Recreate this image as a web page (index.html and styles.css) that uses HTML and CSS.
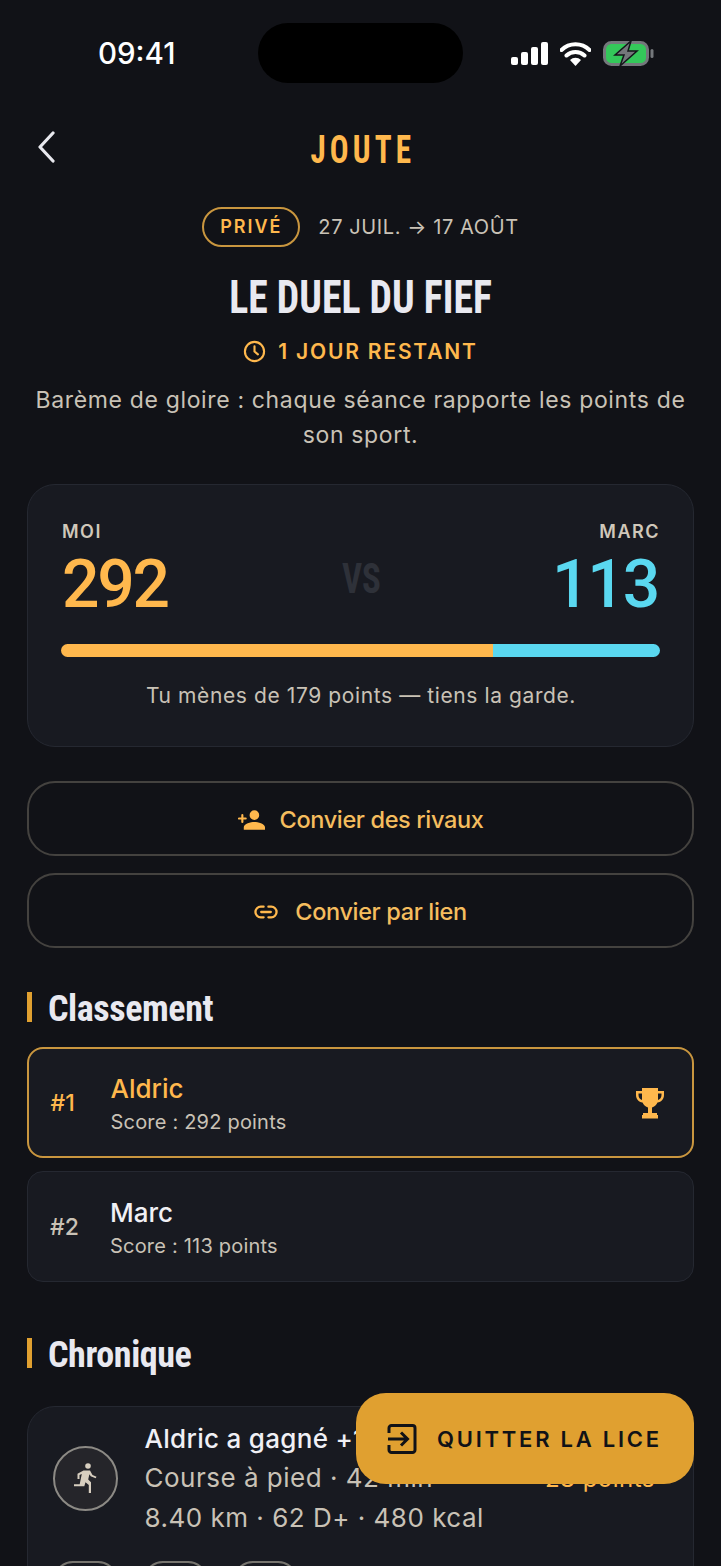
FILE: index.html
```html
<!DOCTYPE html>
<html lang="fr">
<head>
<meta charset="utf-8">
<title>Joute</title>
<link rel="stylesheet" href="styles.css">
</head>
<body>
<div class="screen">
  <div class="status">
    <span class="time">09:41</span>
    <span class="island"></span>
    <span class="sys">
      <svg class="sig" width="37" height="23" viewBox="0 0 37 23"><rect x="0" y="15" width="7" height="8" rx="2"/><rect x="10" y="10" width="7" height="13" rx="2"/><rect x="20" y="5" width="7" height="18" rx="2"/><rect x="30" y="0" width="7" height="23" rx="2"/></svg>
      <svg class="wifi" width="31" height="24" viewBox="0 0 31 24"><path d="M1.5 8a20 20 0 0 1 28 0M6.5 13.5a13 13 0 0 1 18 0" fill="none" stroke="#fff" stroke-width="4" stroke-linecap="round"/><path d="M15.5 24l-5.5-6a8 8 0 0 1 11 0z" fill="#fff"/></svg>
      <svg class="batt" width="51" height="25" viewBox="0 0 51 25"><rect x="1.500" y="1.500" width="43" height="22" rx="7" fill="#34c85a" stroke="#74777b" stroke-width="3"/><rect x="47.500" y="8" width="3" height="9" rx="1.500" fill="#74777b"/><path d="M28 0L12 14h9l-4 11 17-15h-9z" fill="#74777b" stroke="#14151a" stroke-width="1.500"/></svg>
    </span>
  </div>

  <header class="top">
    <svg class="back" width="18" height="32" viewBox="0 0 18 32"><path d="M16 2L3 16l13 14" fill="none" stroke="#e8e8ee" stroke-width="3.200" stroke-linecap="round" stroke-linejoin="round"/></svg>
    <span class="brand">JOUTE</span>
  </header>

  <div class="meta">
    <span class="badge">PRIVÉ</span>
    <span class="dates">27 JUIL. → 17 AOÛT</span>
  </div>
  <h1 class="title">LE DUEL DU FIEF</h1>
  <div class="remain">
    <svg width="23" height="23" viewBox="0 0 24 24"><circle cx="12" cy="12" r="10" fill="none" stroke="#ffb84d" stroke-width="2.200"/><path d="M12 6.500V12l3.600 3" fill="none" stroke="#ffb84d" stroke-width="2.200" stroke-linecap="round"/></svg>
    <span>1 JOUR RESTANT</span>
  </div>
  <p class="desc">Barème de gloire : chaque séance rapporte les points de son sport.</p>

  <section class="score">
    <div class="score-row">
      <div class="side">
        <span class="who">MOI</span>
        <span class="num me">292</span>
      </div>
      <span class="vs">VS</span>
      <div class="side right">
        <span class="who">MARC</span>
        <span class="num rival">113</span>
      </div>
    </div>
    <div class="bar"><span class="bar-me" style="width:72.1%"></span><span class="bar-rival"></span></div>
    <p class="lead">Tu mènes de 179 points — tiens la garde.</p>
  </section>

  <a class="btn first">
    <svg width="27" height="22" viewBox="0 0 28 22"><path d="M17.500 1a5 5 0 1 1 0 10 5 5 0 0 1 0-10zM6.500 21v-2.500c0-3.600 7.300-5.500 11-5.500s11 1.900 11 5.500V21z" fill="#ffb84d" transform="translate(-.5 0)"/><path d="M1 9.500h7M4.500 6v7" stroke="#ffb84d" stroke-width="2.200" stroke-linecap="round"/></svg>
    <span>Convier des rivaux</span>
  </a>
  <a class="btn link">
    <svg width="24" height="14" viewBox="0 0 25 14"><path d="M10 1.500H7a5.500 5.500 0 0 0 0 11h3M15 1.500h3a5.500 5.500 0 0 1 0 11h-3M7.500 7h10" fill="none" stroke="#ffb84d" stroke-width="2.400" stroke-linecap="round"/></svg>
    <span>Convier par lien</span>
  </a>

  <h2 class="sec sec-rank">Classement</h2>
  <div class="rank lead-rank">
    <span class="pos">#1</span>
    <div class="rank-body">
      <span class="name">Aldric</span>
      <span class="pts">Score : 292 points</span>
    </div>
    <svg class="trophy" width="30" height="32" viewBox="0 0 30 32"><path d="M7 1h16v3h6v4c0 4-2.600 7-6.500 7.600-1.100 2.600-3.300 4.300-5.500 4.800V26h5v2H8v-2h5v-5.600c-2.200-.5-4.400-2.200-5.500-4.800C3.600 15 1 12 1 8V4h6zM3.500 6.500V8c0 2.400 1.400 4.300 3.500 5V6.500zm23 0H23V13c2.100-.7 3.500-2.600 3.500-5z" fill="#ffb84d"/><rect x="7" y="28" width="16" height="3.500" fill="#ffb84d"/></svg>
  </div>
  <div class="rank">
    <span class="pos">#2</span>
    <div class="rank-body">
      <span class="name">Marc</span>
      <span class="pts">Score : 113 points</span>
    </div>
  </div>

  <h2 class="sec sec-log">Chronique</h2>
  <article class="entry">
    <div class="entry-row">
      <span class="sport">
        <svg width="23" height="30" viewBox="0 0 23 30"><circle cx="14" cy="3" r="2.800" fill="#d8cfc0"/><path d="M9.500 7.500h6.500l2.500 4.500 4 1.800-.8 1.500-5-2.100-1.300-2-1.200 5.300 2.800 2.800V30h-2.200v-8l-3.300-2.700-1.200 4H0v-2h5.700L7.800 11l-2.300 1.100v4H3.500v-5.300z" fill="#d8cfc0"/></svg>
      </span>
      <div class="entry-text">
        <span class="entry-title">Aldric a gagné +18 points</span>
        <div class="entry-mid">
          <span>Course à pied · 42 min</span>
          <span class="gain">28 points</span>
        </div>
        <span>8.40 km · 62 D+ · 480 kcal</span>
      </div>
    </div>
    <div class="chips"><span class="chip"></span><span class="chip"></span><span class="chip"></span></div>
  </article>

  <a class="fab">
    <svg width="30" height="30" viewBox="0 0 30 30"><path d="M2 9V4a2.500 2.500 0 0 1 2.500-2.500h21A2.500 2.500 0 0 1 28 4v22a2.500 2.500 0 0 1-2.500 2.500h-21A2.500 2.500 0 0 1 2 26v-5M1 15h19M14 8.500l6.500 6.500-6.500 6.500" fill="none" stroke="#111217" stroke-width="3"/></svg>
    <span>QUITTER LA LICE</span>
  </a>
</div>
</body>
</html>
```
FILE: styles.css
```css
* { box-sizing: border-box; }
html, body { margin: 0; padding: 0; background: #111217; }
.screen {
  position: relative;
  width: 721px;
  height: 1566px;
  overflow: hidden;
  padding: 0 27px;
  background: #111217;
  color: #c9c2b6;
  font-family: Inter, "Liberation Sans", sans-serif;
}
.status { position: relative; height: 83px; margin: 0 -27px; padding-top: 23px; display: flex; justify-content: center; }
.time { position: absolute; left: 98px; top: 36px; color: #fff; font-size: 29.500px; font-weight: 500; line-height: 34px; }
.island { width: 205px; height: 60px; border-radius: 30px; background: #000; }
.sys { position: absolute; left: 511px; top: 41px; display: flex; align-items: center; gap: 12px; }
.sig { fill: #fff; }
.top { position: relative; height: 50px; margin-top: 42px; display: flex; align-items: center; justify-content: center; }
.back { position: absolute; left: 10px; top: 6px; }
.brand, .title, .sec, .vs { font-family: Roboto, "Liberation Sans", sans-serif; font-weight: 700; font-stretch: 75%; }
.brand { color: #ffb84d; font-size: 38px; letter-spacing: 5px; margin-left: 5px; line-height: 50px; transform: scaleX(.82); }
.meta { margin-top: 32px; height: 40px; display: flex; align-items: center; justify-content: center; gap: 18px; }
.badge { height: 40px; width: 98px; padding-bottom: 2px; border: 2px solid #c9963f; border-radius: 20px; color: #ffb84d; font-size: 18px; font-weight: 600; letter-spacing: 2px; display: flex; align-items: center; justify-content: center; }
.dates { font-size: 20px; letter-spacing: .6px; }
.title { margin: 26px 0 0; text-align: center; color: #e9e9f0; font-size: 47px; line-height: 48px; transform: scaleX(.845); }
.remain { margin-top: 16px; height: 28px; display: flex; align-items: center; justify-content: center; gap: 12px; color: #ffb84d; font-size: 21px; font-weight: 600; letter-spacing: 1.800px; }
.desc { margin: 18px 0 0; text-align: center; font-size: 23px; line-height: 35px; letter-spacing: .65px; }
.score { height: 263px; margin-top: 31px; padding: 36px 33px 0 34px; border: 1.500px solid #252831; border-radius: 28px; background: #181a21; }
.score-row { display: grid; grid-template-columns: 1fr auto 1fr; align-items: start; }
.side { display: flex; flex-direction: column; }
.side.right { align-items: flex-end; }
.who { font-size: 18px; font-weight: 600; letter-spacing: 1.500px; line-height: 22px; color: #d0c8ba; }
.num { font-family: Roboto, "Liberation Sans", sans-serif; font-size: 66px; font-weight: 500; line-height: 72px; margin-top: 6px; letter-spacing: -2.200px; }
.me { color: #ffb84d; }
.rival { color: #5ad8f0; margin-right: 2px; }
.vs { color: #2e3139; font-size: 42px; margin-top: 36px; line-height: 44px; transform: scaleX(.83); }
.bar { display: flex; height: 13px; margin: 23px 0 0 -1px; border-radius: 7px; overflow: hidden; }
.bar-me { background: #ffb84d; }
.bar-rival { flex: 1; background: #5ad8f0; }
.lead { margin: 25px 0 0; text-align: center; font-size: 21px; letter-spacing: .6px; line-height: 28px; }
.btn { height: 75px; margin-top: 17px; padding-top: 2px; border: 2px solid #44423f; border-radius: 28px; display: flex; align-items: center; justify-content: center; gap: 15px; color: #f5bd5e; font-size: 23.500px; font-weight: 500; letter-spacing: -.35px; }
.btn.first { margin-top: 34px; }
.btn.link { gap: 17px; }
.sec { margin: 0; padding-left: 16px; border-left: 5px solid #e0a030; color: #e9e9f0; font-size: 36px; line-height: 34px; height: 30px; letter-spacing: -.4px; }
.sec-rank { margin-top: 44px; margin-bottom: 25px; }
.sec-log { margin-top: 56px; margin-bottom: 38px; }
.rank { height: 111px; margin-top: 13px; padding: 0 22px; display: flex; align-items: center; border: 1.500px solid #252831; border-radius: 16px; background: #181a21; }
.sec + .rank { margin-top: 0; }
.lead-rank { border: 2px solid #c9963f; padding-left: 21.500px; }
.pos { width: 60px; font-size: 23px; font-weight: 500; }
.rank-body { flex: 1; display: flex; flex-direction: column; gap: 2px; padding-top: 2px; }
.name { font-size: 26px; font-weight: 500; color: #f0f0f5; line-height: 34px; }
.pts { font-size: 20px; letter-spacing: .2px; line-height: 28px; }
.lead-rank .pos, .lead-rank .name { color: #ffb84d; }
.trophy { margin-right: 5px; }
.entry { height: 300px; padding: 0 25px; border: 1.500px solid #252831; border-radius: 28px; background: #181a21; }
.entry-row { display: flex; align-items: center; gap: 26.500px; padding-top: 12px; }
.sport { flex: none; width: 65px; height: 65px; border: 2px solid #8c8a85; border-radius: 50%; background: #25252a; display: flex; align-items: center; justify-content: center; }
.entry-text { flex: 1; display: flex; flex-direction: column; font-size: 26px; letter-spacing: .5px; line-height: 39px; }
.entry-title { color: #f0f0f5; font-weight: 500; letter-spacing: .3px; }
.entry-mid { display: flex; justify-content: space-between; align-items: baseline; }
.gain { color: #ffb84d; font-size: 24px; margin-right: 13px; }
.chips { display: flex; gap: 25px; margin-top: 24px; }
.chip { width: 65px; height: 40px; border: 2px solid #77756f; border-radius: 20px; }
.fab { position: absolute; left: 356px; top: 1393px; width: 338px; height: 91px; padding-left: 31px; border-radius: 30px; background: #e0a030; display: flex; align-items: center; gap: 20px; color: #111217; font-size: 22px; font-weight: 600; letter-spacing: 2.750px; }
```
